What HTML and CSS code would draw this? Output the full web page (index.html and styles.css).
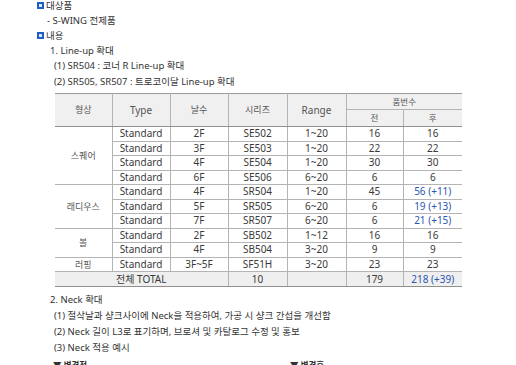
FILE: index.html
```html
<!DOCTYPE html>
<html lang="ko">
<head>
<meta charset="utf-8">
<link rel="stylesheet" href="styles.css">
</head>
<body>
<div class="doc">
  <div class="head"><span class="sq"></span>대상품</div>
  <div class="l1">- S-WING 전제품</div>
  <div class="head"><span class="sq"></span>내용</div>
  <div class="l2">1. Line-up 확대</div>
  <div class="l3">(1) SR504 : 코너 R Line-up 확대</div>
  <div class="l3">(2) SR505, SR507 : 트로코이달 Line-up 확대</div>
  <table class="tbl">
    <colgroup>
      <col class="c57"><col class="c58"><col class="c58"><col class="c59"><col class="c59"><col class="c57"><col class="c59">
    </colgroup>
    <thead>
      <tr class="hr1">
        <th rowspan="2" class="ko">형상</th>
        <th rowspan="2" class="en">Type</th>
        <th rowspan="2" class="ko">날수</th>
        <th rowspan="2" class="ko">시리즈</th>
        <th rowspan="2" class="en">Range</th>
        <th colspan="2" class="sm">품번수</th>
      </tr>
      <tr class="hr2">
        <th class="sm">전</th>
        <th class="sm">후</th>
      </tr>
    </thead>
    <tbody>
      <tr class="grp"><td rowspan="4" class="shape">스퀘어</td><td>Standard</td><td>2F</td><td>SE502</td><td>1~20</td><td>16</td><td>16</td></tr>
      <tr><td>Standard</td><td>3F</td><td>SE503</td><td>1~20</td><td>22</td><td>22</td></tr>
      <tr><td>Standard</td><td>4F</td><td>SE504</td><td>1~20</td><td>30</td><td>30</td></tr>
      <tr><td>Standard</td><td>6F</td><td>SE506</td><td>6~20</td><td>6</td><td>6</td></tr>
      <tr class="grp"><td rowspan="3" class="shape">래디우스</td><td>Standard</td><td>4F</td><td>SR504</td><td>1~20</td><td>45</td><td class="blue">56 (+11)</td></tr>
      <tr><td>Standard</td><td>5F</td><td>SR505</td><td>6~20</td><td>6</td><td class="blue">19 (+13)</td></tr>
      <tr><td>Standard</td><td>7F</td><td>SR507</td><td>6~20</td><td>6</td><td class="blue">21 (+15)</td></tr>
      <tr class="grp"><td rowspan="2" class="shape">볼</td><td>Standard</td><td>2F</td><td>SB502</td><td>1~12</td><td>16</td><td>16</td></tr>
      <tr><td>Standard</td><td>4F</td><td>SB504</td><td>3~20</td><td>9</td><td>9</td></tr>
      <tr class="grp"><td class="shape">러핑</td><td>Standard</td><td>3F~5F</td><td>SF51H</td><td>3~20</td><td>23</td><td>23</td></tr>
      <tr class="total"><td colspan="3">전체 TOTAL</td><td>10</td><td></td><td>179</td><td class="blue">218 (+39)</td></tr>
    </tbody>
  </table>
  <div class="l2 after">2. Neck 확대</div>
  <div class="l3">(1) 절삭날과 샹크사이에 Neck을 적용하여, 가공 시 샹크 간섭을 개선함</div>
  <div class="l3">(2) Neck 길이 L3로 표기하며, 브로셔 및 카탈로그 수정 및 홍보</div>
  <div class="l3">(3) Neck 적용 예시</div>
  <div class="compare">
    <span class="cmp">▼ 변경전</span>
    <span class="cmp">▼ 변경후</span>
  </div>
</div>
</body>
</html>
```

FILE: styles.css
```css
html, body {
  margin: 0;
  padding: 0;
  background: #ffffff;
}

.doc {
  font-family: "Noto Sans", "Noto Sans CJK KR", sans-serif;
  color: #333333;
  font-size: 9.5px;
  line-height: 15px;
  padding-left: 37px;
  margin-top: -2px;
}

.head {
  display: flex;
  align-items: center;
  gap: 1px;
}

.sq {
  display: inline-block;
  width: 3px;
  height: 3px;
  border: 2px solid #1f5fc4;
  background: #d8e6fb;
  margin-right: 1px;
}

.l1 {
  padding-left: 10px;
}

.l2 {
  padding-left: 13px;
}

.l3 {
  padding-left: 17px;
  line-height: 16px;
}

.l2.after {
  margin-top: 5px;
  line-height: 16px;
}

.tbl {
  margin: 3px 0 0 18px;
  border-collapse: collapse;
  width: 407px;
  table-layout: fixed;
  font-size: 10px;
  color: #3a3a3a;
}

.c57 { width: 57px; }
.c58 { width: 58px; }
.c59 { width: 59px; }

.tbl th,
.tbl td {
  padding: 0;
  text-align: center;
  border: 1px solid #b4b4b4;
  font-weight: normal;
}

.tbl tr > :first-child {
  border-left: none;
}

.tbl tr > :last-child {
  border-right: none;
}

.tbl thead th {
  background: #f0f0f0;
  color: #555555;
  border-top: 1px solid #9a9a9a;
}

.tbl thead th.ko {
  font-size: 9px;
}

.tbl thead th.en {
  font-size: 10px;
}

.tbl thead th.sm {
  font-size: 8.5px;
}

.hr1 th {
  height: 15px;
  line-height: 14px;
}

.hr2 th {
  height: 16px;
  line-height: 14px;
  border-top: 1px solid #c8c8c8 !important;
}

.tbl thead tr:last-child th,
.tbl thead th[rowspan] {
  border-bottom: 1px solid #8f8f8f;
}

.tbl td {
  height: 13.5px;
  line-height: 13px;
}

.tbl tr.grp td {
  border-top: 1px solid #9a9a9a;
}

.tbl td.shape {
  font-size: 9px;
  color: #555555;
}

.tbl .blue {
  color: #2c56b0;
}

.tbl tr.total td {
  background: #efefef;
  border-top: 1px solid #9a9a9a;
  border-bottom: 1px solid #8f8f8f;
  height: 14px;
}

.compare {
  display: flex;
  padding-left: 16px;
  margin-top: 1px;
  font-size: 8.5px;
  font-weight: bold;
  color: #333333;
}

.cmp:first-child {
  width: 237px;
}
```
